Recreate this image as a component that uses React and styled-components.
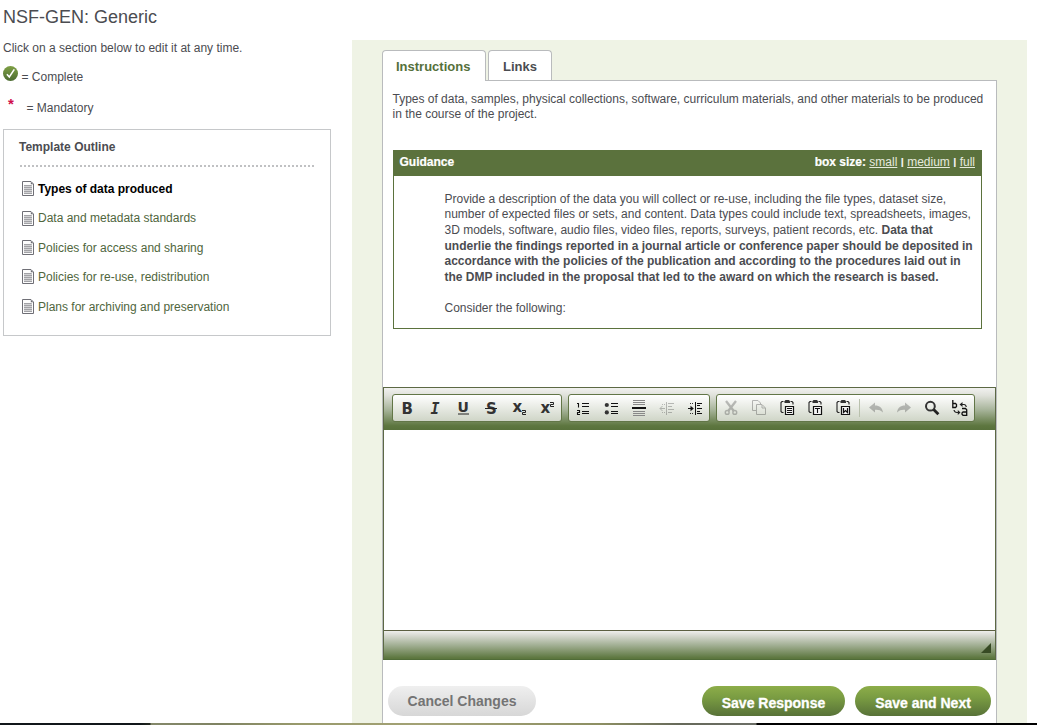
import React from "react";
import styled, { createGlobalStyle } from "styled-components";

const GlobalStyle = createGlobalStyle`
  *, *::before, *::after { box-sizing: border-box; }
  body {
    margin: 0;
    background: #fff;
    color: #4b4c51;
    font-family: "Liberation Sans", Arial, Helvetica, sans-serif;
    font-size: 12px;
    overflow: hidden;
  }
`;

const Page = styled.div`
  display: flex;
  flex-direction: column;
  width: 1037px;
  height: 725px;
  overflow: hidden;
`;

const Columns = styled.main`
  display: flex;
  align-items: flex-start;
  height: 723px;
`;

const Sidebar = styled.aside`
  width: 352px;
  padding: 6px 0 0 3px;
`;

const Title = styled.h1`
  margin: 0;
  font-size: 18px;
  line-height: 22px;
  font-weight: 400;
  white-space: nowrap;
`;

const Hint = styled.p`
  margin: 12px 0 0;
  line-height: 16px;
  white-space: nowrap;
`;

const LegendRow = styled.div`
  display: flex;
  align-items: flex-start;
  height: ${(p) => p.$height}px;
  margin-top: ${(p) => p.$top}px;
  line-height: 16px;
`;

const LegendText = styled.span`
  margin: 3px 0 0 ${(p) => p.$left}px;
`;

const Asterisk = styled.span`
  width: 7px;
  margin-left: 5px;
  color: #d0104c;
  font-size: 15px;
  line-height: 14px;
  font-weight: 700;
`;

const OutlineBox = styled.section`
  width: 328px;
  height: 207px;
  margin-top: 10px;
  padding: 9px 15px 0;
  border: 1px solid #c6c8ca;
`;

const OutlineTitle = styled.h2`
  margin: 0;
  padding-bottom: 10px;
  height: 28px;
  font-size: 12px;
  line-height: 16px;
  background: repeating-linear-gradient(90deg, #c0c1c3 0 2px, transparent 2px 4px) 1px 100% / 294px 2px no-repeat;
`;

const OutlineList = styled.ul`
  margin: 0;
  padding: 7px 0 0 3px;
  list-style: none;
`;

const OutlineItem = styled.li`
  display: flex;
  align-items: center;
  gap: 4px;
  height: ${(p) => p.$height}px;
  color: ${(p) => (p.$active ? "#000" : "#50663d")};
  font-weight: ${(p) => (p.$active ? 700 : 400)};
  white-space: nowrap;
`;

const Workspace = styled.section`
  width: 675px;
  height: 683px;
  margin-top: 40px;
  padding: 10px 30px 0;
  background: #eff3e5;
`;

const Tabs = styled.nav`
  display: flex;
  gap: 2px;
  height: 31px;
  margin-bottom: -1px;
`;

const Tab = styled.div`
  position: relative;
  z-index: 1;
  width: ${(p) => p.$width}px;
  padding-left: ${(p) => p.$pad}px;
  height: ${(p) => (p.$active ? 31 : 30)}px;
  border: 1px solid #b9bbbd;
  border-bottom: 0;
  border-radius: 4px 4px 0 0;
  background: #fff;
  color: ${(p) => (p.$active ? "#55703b" : "#4b4c51")};
  font-size: 13px;
  line-height: 32px;
  font-weight: 700;
`;

const Panel = styled.div`
  width: 615px;
  height: 643px;
  border: 1px solid #b9bbbd;
  border-bottom: 0;
  background: #fff;
`;

const Intro = styled.p`
  margin: 11px 0 0 9.5px;
  height: 30.8px;
  line-height: 15.4px;
  letter-spacing: -0.008px;
  white-space: nowrap;
`;

const Guidance = styled.section`
  width: 589px;
  height: 179px;
  margin: 27px 0 0 10px;
  border: 1px solid #5b723d;
`;

const GuidanceHeader = styled.header`
  display: flex;
  justify-content: space-between;
  height: 25px;
  padding: 0 6px 0 5.5px;
  background: #5b723d;
  color: #fff;
  line-height: 22px;
  font-weight: 700;
  -webkit-text-stroke: 0.2px #fff;
`;

const SizeLink = styled.a`
  color: #e6eadd;
  font-weight: 400;
  text-decoration: underline;
  -webkit-text-stroke: 0;
`;

const Pipe = styled.span`
  position: relative;
  top: -1px;
  padding: 0 0.3px;
  font-size: 9px;
`;

const GuidanceText = styled.div`
  padding: 16px 0 0 50.5px;
  line-height: 15.65px;
  white-space: nowrap;
`;

const Line = styled.div`
  height: 15.65px;
  letter-spacing: -0.006px;
`;

const Editor = styled.div`
  width: 613px;
  height: 273px;
  margin-top: 58px;
  border: 1px solid #5c6944;
  border-bottom-color: #506c38;
`;

const Toolbar = styled.div`
  display: flex;
  gap: 6px;
  height: 42px;
  padding: 6px 0 0 8px;
  background: linear-gradient(#f1f1ef, #dfe1da 18%, #a7b49a 52%, #5d763f 90%, #58713b);
`;

const ToolGroup = styled.div`
  display: flex;
  align-items: center;
  height: 28px;
  border: 1px solid #627647;
  border-radius: 3px;
  background: linear-gradient(#ffffff, #cfd5c7);
`;

const ToolButton = styled.span`
  display: flex;
  justify-content: center;
  width: 28px;
  opacity: ${(p) => (p.$disabled ? 0.3 : 1)};
`;

const Separator = styled.span`
  width: 1px;
  height: 18px;
  margin: 0 2px;
  background: #b9c1ad;
`;

const EditArea = styled.div`
  height: 200px;
  background: #fff;
`;

const StatusBar = styled.div`
  display: flex;
  justify-content: flex-end;
  align-items: flex-end;
  height: 29px;
  padding: 0 4px 6px 0;
  border-top: 1px solid #5c5f42;
  background: linear-gradient(#eeeeec, #dadcd5 14%, #a3b095 50%, #5c763e 97%);
`;

const Actions = styled.footer`
  display: flex;
  gap: 10px;
  padding: 26px 5px 0;
`;

const PillButton = styled.button`
  width: ${(p) => p.$width}px;
  height: 30px;
  margin: 0;
  padding: ${(p) => (p.$primary ? 4 : 1)}px 0 0;
  margin-right: ${(p) => (p.$primary ? 0 : 156)}px;
  border: 0;
  border-radius: 15px;
  background: ${(p) => (p.$primary ? "linear-gradient(#8dad49, #799b42 40%, #587238)" : "linear-gradient(#efefef, #d7d7d7)")};
  color: ${(p) => (p.$primary ? "#fff" : "#747474")};
  font: 700 14px "Liberation Sans", Arial, sans-serif;
  -webkit-text-stroke: ${(p) => (p.$primary ? 0.3 : 0)}px currentColor;
`;

const BottomStrip = styled.div`
  height: 2px;
  background: linear-gradient(90deg, #11171a 0 140px, #23281f 150px, #84886a 151px, #7f8362 220px, #999a6c 300px, #a3a275 420px, #8d8f63 600px, #66695a 680px, #6c6e66 756px, #000 757px);
`;

const CompleteIcon = () => (
  <svg width="15" height="15" viewBox="0 0 15 15">
    <defs>
      <linearGradient id="ok" x1="0" y1="0" x2="0" y2="1">
        <stop offset="0" stopColor="#7fa045" />
        <stop offset="1" stopColor="#4c6b32" />
      </linearGradient>
    </defs>
    <circle cx="7.5" cy="7.5" r="7.5" fill="url(#ok)" />
    <path d="M3.9 8.2L6.3 11L11.3 3.4" fill="none" stroke="#fff" strokeWidth="1.6" />
  </svg>
);

const DocIcon = () => (
  <svg width="12" height="15" viewBox="0 0 12 15">
    <path d="M.5 .5H9L11.5 3V14.5H.5Z" fill="#fdfdfd" stroke="#6f6f76" />
    <path d="M8.8 .8V3.3H11.2Z" fill="#6f6f76" />
    <path d="M2 4H10V12.5H2Z" fill="#d2d2d4" />
    <path d="M2 4.5H9.5M2 6.5H10M2 8.5H10M2 10.5H10M2 12.5H10" stroke="#a2a2a6" />
  </svg>
);

const Svg = ({ children }) => (
  <svg width="16" height="16" viewBox="0 0 16 16" fill="none" stroke="none" overflow="visible">
    {children}
  </svg>
);

const Glyph = ({ x, y, size, mono, italic, children }) => (
  <text
    x={x}
    y={y}
    fill="#333"
    fontSize={size}
    fontWeight="700"
    fontStyle={italic ? "italic" : "normal"}
    fontFamily={mono ? "DejaVu Sans Mono" : "DejaVu Sans"}
  >
    {children}
  </text>
);

const clipboard = (
  <>
    <path d="M4.5 1.5H3L2 2.5V11.5L3 12.5H4.5M11.5 1.5H13L14 2.5V4.5" stroke="#222" strokeWidth="1.1" />
    <path d="M5.5 3V1.2L6.5 0H10L11 1.2V3Z" fill="#333" />
    <path d="M6.5 6.5H14.5V14.5H6.5Z" fill="#f4f4f4" stroke="#111" strokeWidth="1.2" />
  </>
);

const icons = {
  bold: <Glyph x="2.4" y="13.5" size="15">B</Glyph>,
  italic: <Glyph x="3.4" y="13.5" size="15" mono italic>I</Glyph>,
  underline: (
    <>
      <Glyph x="2.6" y="12.2" size="14">U</Glyph>
      <path d="M3 14H14" stroke="#222" />
    </>
  ),
  strike: (
    <>
      <Glyph x="3" y="13.5" size="15">S</Glyph>
      <path d="M2 8.5H14" stroke="#222" />
    </>
  ),
  sub: (
    <>
      <Glyph x="1.4" y="12" size="15">x</Glyph>
      <path d="M11 10.5H14.5V12.5H11.5V14.5H15" stroke="#222" />
    </>
  ),
  sup: (
    <>
      <Glyph x="1.4" y="13" size="15">x</Glyph>
      <path d="M11 2.5H14.5V4.5H11.5V6.5H15" stroke="#222" />
    </>
  ),
  ordered: (
    <>
      <path d="M2 3.5H3.5V7.5M2 10.5H4.5V12.5H2.5V14.5H5" stroke="#111" strokeWidth="1.1" />
      <path d="M7 3.5H14M7 6.5H14M7 11.5H14M7 13.5H14" stroke="#111" />
    </>
  ),
  bullets: (
    <>
      <circle cx="3.8" cy="5" r="2.1" fill="#333" />
      <circle cx="3.8" cy="12.4" r="2.1" fill="#333" />
      <path d="M8 3.5H15M8 6.5H15M8 11.5H15M8 13.5H15" stroke="#111" />
    </>
  ),
  rule: (
    <>
      <path d="M2 .5H14M2 2.5H14M2 4.5H14M2 11.5H14M2 13.5H14M2 15.5H14" stroke="#888" />
      <path d="M1 8H15" stroke="#111" strokeWidth="2" />
    </>
  ),
  outdent: (
    <>
      <path d="M1 8.5H6M3.5 6L1 8.5L3.5 11M7.5 2V15M9 3.5H15M9 6.5H13M9 9.5H15M9 12.5H13" stroke="#333" />
      <path d="M3 4.5H6M3 12.5H6" stroke="#333" strokeDasharray="1 1" />
    </>
  ),
  indent: (
    <>
      <path d="M1 8.5H6M8.5 2V15M10 3.5H15M10 5.5H13M10 8.5H15M10 11.5H13M10 13.5H15" stroke="#111" />
      <path d="M3.5 5.7L6.8 8.5L3.5 11.3Z" fill="#111" />
      <path d="M3 3.5H7M3 13.5H7" stroke="#333" strokeDasharray="1 1" />
    </>
  ),
  cut: (
    <>
      <path d="M3 1L10.8 11M13 1L5.2 11" stroke="#333" strokeWidth="2.3" />
      <circle cx="4.2" cy="12.4" r="1.9" stroke="#333" strokeWidth="1.4" />
      <circle cx="11.8" cy="12.4" r="1.9" stroke="#333" strokeWidth="1.4" />
    </>
  ),
  copy: <path d="M5.5 10.5H1.5V.5H7L9.5 3V4.5M5.5 4.5H11L14.5 8V14.5H5.5ZM11 5V8H14" stroke="#222" />,
  paste: (
    <>
      {clipboard}
      <path d="M8 8.5H13M8 10.5H13M8 12.5H13" stroke="#111" />
    </>
  ),
  pasteText: (
    <>
      {clipboard}
      <path d="M8 8.5H13M10.5 8.5V13" stroke="#111" strokeWidth="1.1" />
    </>
  ),
  pasteWord: (
    <>
      {clipboard}
      <path d="M8.5 8V12.5L10.5 10.5L12.5 12.5V8" stroke="#111" strokeWidth="1.2" />
    </>
  ),
  undo: <path d="M1 7.5L7 2.5V5.5C11.5 5.5 14.5 8 15 12.5C12.5 10 10 9.5 7 9.8V12.5Z" fill="#333" />,
  redo: <path d="M15 7.5L9 2.5V5.5C4.5 5.5 1.5 8 1 12.5C3.5 10 6 9.5 9 9.8V12.5Z" fill="#333" />,
  find: (
    <>
      <circle cx="6.4" cy="6.2" r="4.4" stroke="#333" strokeWidth="2" />
      <path d="M9.6 9.4L14.4 14.2" stroke="#222" strokeWidth="2.8" />
    </>
  ),
  replace: (
    <>
      <path d="M.8 0V7.5H3.5L4.5 6.5V4.5L3.5 3.5H1M10 8.5H13.5L14.7 9.7V15.3H11L10 14.3V13L11 12H14.5" stroke="#111" strokeWidth="1.3" />
      <path d="M8.5 4.5H12Q13.8 4.5 14.3 7M2 10Q2.5 12.5 5 12.5H8" stroke="#222" strokeWidth="1.2" />
      <path d="M7.5 4.5L10.5 2V7ZM8.5 12.5L5.8 10V15Z" fill="#222" />
    </>
  ),
};

const Tool = ({ name, disabled }) => (
  <ToolButton $disabled={disabled}>
    <Svg>{icons[name]}</Svg>
  </ToolButton>
);

const outline = [
  { label: "Types of data produced", active: true, height: 29 },
  { label: "Data and metadata standards", height: 30 },
  { label: "Policies for access and sharing", height: 29 },
  { label: "Policies for re-use, redistribution", height: 29 },
  { label: "Plans for archiving and preservation", height: 31 },
];

export default function App() {
  return (
    <Page>
      <GlobalStyle />
      <Columns>
        <Sidebar>
          <Title>NSF-GEN: Generic</Title>
          <Hint>Click on a section below to edit it at any time.</Hint>
          <LegendRow $height={22} $top={10}>
            <CompleteIcon />
            <LegendText $left={3.5}>= Complete</LegendText>
          </LegendRow>
          <LegendRow $height={22} $top={9}>
            <Asterisk>*</Asterisk>
            <LegendText $left={11.5}>= Mandatory</LegendText>
          </LegendRow>
          <OutlineBox>
            <OutlineTitle>Template Outline</OutlineTitle>
            <OutlineList>
              {outline.map((item) => (
                <OutlineItem key={item.label} $active={item.active} $height={item.height}>
                  <DocIcon />
                  {item.label}
                </OutlineItem>
              ))}
            </OutlineList>
          </OutlineBox>
        </Sidebar>
        <Workspace>
          <Tabs>
            <Tab $active $width={104} $pad={13}>Instructions</Tab>
            <Tab $width={64} $pad={14}>Links</Tab>
          </Tabs>
          <Panel>
            <Intro>
              Types of data, samples, physical collections, software, curriculum materials, and other materials to be produced
              <br />
              in the course of the project.
            </Intro>
            <Guidance>
              <GuidanceHeader>
                <span>Guidance</span>
                <span>
                  box size: <SizeLink>small</SizeLink> <Pipe>|</Pipe> <SizeLink>medium</SizeLink> <Pipe>|</Pipe> <SizeLink>full</SizeLink>
                </span>
              </GuidanceHeader>
              <GuidanceText>
                <Line>Provide a description of the data you will collect or re-use, including the file types, dataset size,</Line>
                <Line>number of expected files or sets, and content. Data types could include text, spreadsheets, images,</Line>
                <Line>3D models, software, audio files, video files, reports, surveys, patient records, etc. <b>Data that</b></Line>
                <Line><b>underlie the findings reported in a journal article or conference paper should be deposited in</b></Line>
                <Line><b>accordance with the policies of the publication and according to the procedures laid out in</b></Line>
                <Line><b>the DMP included in the proposal that led to the award on which the research is based.</b></Line>
                <Line />
                <Line>Consider the following:</Line>
              </GuidanceText>
            </Guidance>
            <Editor>
              <Toolbar>
                <ToolGroup>
                  {["bold", "italic", "underline", "strike", "sub", "sup"].map((n) => <Tool key={n} name={n} />)}
                </ToolGroup>
                <ToolGroup>
                  <Tool name="ordered" />
                  <Tool name="bullets" />
                  <Tool name="rule" />
                  <Tool name="outdent" disabled />
                  <Tool name="indent" />
                </ToolGroup>
                <ToolGroup>
                  <Tool name="cut" disabled />
                  <Tool name="copy" disabled />
                  <Tool name="paste" />
                  <Tool name="pasteText" />
                  <Tool name="pasteWord" />
                  <Separator />
                  <Tool name="undo" disabled />
                  <Tool name="redo" disabled />
                  <Tool name="find" />
                  <Tool name="replace" />
                </ToolGroup>
              </Toolbar>
              <EditArea />
              <StatusBar>
                <svg width="10" height="10" viewBox="0 0 10 10">
                  <path d="M10 0V10H0Z" fill="#374a24" />
                </svg>
              </StatusBar>
            </Editor>
            <Actions>
              <PillButton $width={148}>Cancel Changes</PillButton>
              <PillButton $primary $width={143}>Save Response</PillButton>
              <PillButton $primary $width={136}>Save and Next</PillButton>
            </Actions>
          </Panel>
        </Workspace>
      </Columns>
      <BottomStrip />
    </Page>
  );
}
